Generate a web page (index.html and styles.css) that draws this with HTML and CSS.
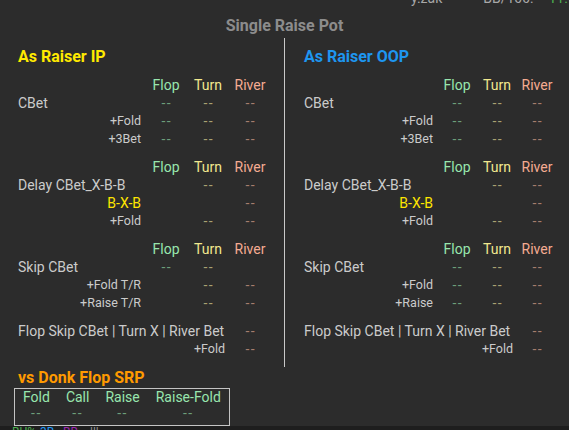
FILE: index.html
```html
<!DOCTYPE html>
<html>
<head>
<meta charset="utf-8">
<link rel="stylesheet" href="styles.css">
</head>
<body>
<div class="top">
  <span class="top-label name">y.zak</span>
  <span class="top-label bb">BB/100:</span>
  <span class="top-value">11.5</span>
</div>
<h1 class="title">Single Raise Pot</h1>
<div class="panels">
  <section class="panel panel-left">
    <h2 class="panel-head ip">As Raiser IP</h2>
    <div class="grid grid-left">
      <div class="group">
        <span></span><span class="h flop">Flop</span><span class="h turn">Turn</span><span class="h river">River</span>
        <span class="lab">CBet</span><span class="d flop">--</span><span class="d turn">--</span><span class="d river">--</span>
        <span class="sub">+Fold</span><span class="d flop">--</span><span class="d turn">--</span><span class="d river">--</span>
        <span class="sub">+3Bet</span><span class="d flop">--</span><span class="d turn">--</span><span class="d river">--</span>
      </div>
      <div class="group">
        <span></span><span class="h flop">Flop</span><span class="h turn">Turn</span><span class="h river">River</span>
        <span class="lab">Delay CBet_X-B-B</span><span></span><span class="d turn">--</span><span class="d river">--</span>
        <span class="sub yel">B-X-B</span><span></span><span></span><span class="d river">--</span>
        <span class="sub">+Fold</span><span></span><span class="d turn">--</span><span class="d river">--</span>
      </div>
      <div class="group">
        <span></span><span class="h flop">Flop</span><span class="h turn">Turn</span><span class="h river">River</span>
        <span class="lab">Skip CBet</span><span class="d flop">--</span><span class="d turn">--</span><span></span>
        <span class="sub">+Fold T/R</span><span></span><span class="d turn">--</span><span class="d river">--</span>
        <span class="sub">+Raise T/R</span><span></span><span class="d turn">--</span><span class="d river">--</span>
      </div>
      <div class="group">
        <span class="lab wide">Flop Skip CBet | Turn X | River Bet</span><span class="d river">--</span>
        <span class="sub wide">+Fold</span><span class="d river">--</span>
      </div>
    </div>
  </section>
  <div class="divider"></div>
  <section class="panel panel-right">
    <h2 class="panel-head oop">As Raiser OOP</h2>
    <div class="grid grid-right">
      <div class="group">
        <span></span><span class="h flop">Flop</span><span class="h turn">Turn</span><span class="h river">River</span>
        <span class="lab">CBet</span><span class="d flop">--</span><span class="d turn">--</span><span class="d river">--</span>
        <span class="sub">+Fold</span><span class="d flop">--</span><span class="d turn">--</span><span class="d river">--</span>
        <span class="sub">+3Bet</span><span class="d flop">--</span><span class="d turn">--</span><span class="d river">--</span>
      </div>
      <div class="group">
        <span></span><span class="h flop">Flop</span><span class="h turn">Turn</span><span class="h river">River</span>
        <span class="lab">Delay CBet_X-B-B</span><span></span><span class="d turn">--</span><span class="d river">--</span>
        <span class="sub yel">B-X-B</span><span></span><span></span><span class="d river">--</span>
        <span class="sub">+Fold</span><span></span><span class="d turn">--</span><span class="d river">--</span>
      </div>
      <div class="group">
        <span></span><span class="h flop">Flop</span><span class="h turn">Turn</span><span class="h river">River</span>
        <span class="lab">Skip CBet</span><span class="d flop">--</span><span class="d turn">--</span><span class="d river">--</span>
        <span class="sub">+Fold</span><span class="d flop">--</span><span class="d turn">--</span><span class="d river">--</span>
        <span class="sub">+Raise</span><span class="d flop">--</span><span class="d turn">--</span><span class="d river">--</span>
      </div>
      <div class="group">
        <span class="lab wide">Flop Skip CBet | Turn X | River Bet</span><span class="d river">--</span>
        <span class="sub wide">+Fold</span><span class="d river">--</span>
      </div>
    </div>
  </section>
</div>
<section class="donk">
  <h2 class="panel-head donk-head">vs Donk Flop SRP</h2>
  <table class="donk-table">
    <tr><th>Fold</th><th>Call</th><th>Raise</th><th>Raise-Fold</th></tr>
    <tr><td>--</td><td>--</td><td>--</td><td>--</td></tr>
  </table>
</section>
<div class="footer">
  <span class="f-green">BU%</span>
  <span class="f-blue">3B</span>
  <span class="f-purple">BB</span>
  <span class="f-gray">|||</span>
</div>
</body>
</html>
```
FILE: styles.css
```css
html, body {
  margin: 0;
  height: 430px;
  overflow: hidden;
}
body {
  background: #2c2c2c;
  font-family: Roboto, "Liberation Sans", sans-serif;
  font-size: 14px;
  color: #c8c8c8;
}
.top {
  display: flex;
  height: 16px;
  line-height: 16px;
  margin-top: -10px;
  padding-left: 411px;
}
.top-label { color: #a8a8a8; }
.top-label.bb { margin-left: 41px; }
.top-value { color: #4caf50; margin-left: 15px; }

.title {
  margin: 10px 0 0;
  font-size: 16px;
  line-height: 19px;
  font-weight: 700;
  color: #8c8c8c;
  text-align: center;
}
.panels {
  display: flex;
  margin-top: 3px;
  height: 329px;
}
.panel { padding-top: 9px; }
.panel-left { width: 284px; }
.panel-right { flex: 1; }
.divider { width: 1px; background: #c9c9c9; }

.panel-head {
  margin: 0;
  font-size: 16px;
  line-height: 19px;
  font-weight: 700;
}
.panel-left .panel-head { padding-left: 18px; }
.panel-right .panel-head { padding-left: 19px; }
.ip { color: #ffea00; }
.oop { color: #1e96f0; }

.grid { margin-top: 10px; }
.grid-left { padding-left: 18px; }
.grid-right { padding-left: 19px; }
.group {
  display: grid;
  line-height: 18px;
  margin-bottom: 10px;
}
.grid-left .group { grid-template-columns: 127px 42px 42px 42px; }
.grid-right .group { grid-template-columns: 133px 40px 40px 40px; }

.h { text-align: center; }
.h.flop { color: #98e6ae; }
.h.turn { color: #f2e88e; }
.h.river { color: #f5ab92; }

.d { text-align: center; letter-spacing: 1.5px; padding-left: 1.5px; }
.d.flop { color: #6d9e7b; }
.d.turn { color: #a9a273; }
.d.river { color: #a57e6e; }

.lab { color: #cbcbcb; }
.sub {
  color: #cbcbcb;
  font-size: 12.5px;
  text-align: right;
  padding-right: 4px;
}
.sub.yel { color: #ffe600; font-size: 14px; }
.wide { grid-column: span 3; }

.donk { padding-top: 1px; }
.donk-head {
  color: #ff9a00;
  padding-left: 18px;
}
.donk-table {
  margin: 1px 0 0 14px;
  border: 1px solid #c4c4c4;
  border-collapse: separate;
  border-spacing: 0;
  padding: 0 0 4px;
  line-height: 16px;
}
.donk-table th,
.donk-table td {
  padding: 0 8px;
  text-align: center;
  font-weight: 400;
}
.donk-table th { color: #98e6ae; }
.donk-table td { color: #6d9e7b; letter-spacing: 1.5px; }

.footer {
  display: flex;
  background: #1e1e1e;
  height: 20px;
  font-size: 12px;
  line-height: 12px;
  padding-left: 12px;
}
.f-green { color: #4caf50; width: 28px; }
.f-blue { color: #2196f3; width: 23px; }
.f-purple { color: #9c27b0; width: 27px; }
.f-gray { color: #9e9e9e; }
```
